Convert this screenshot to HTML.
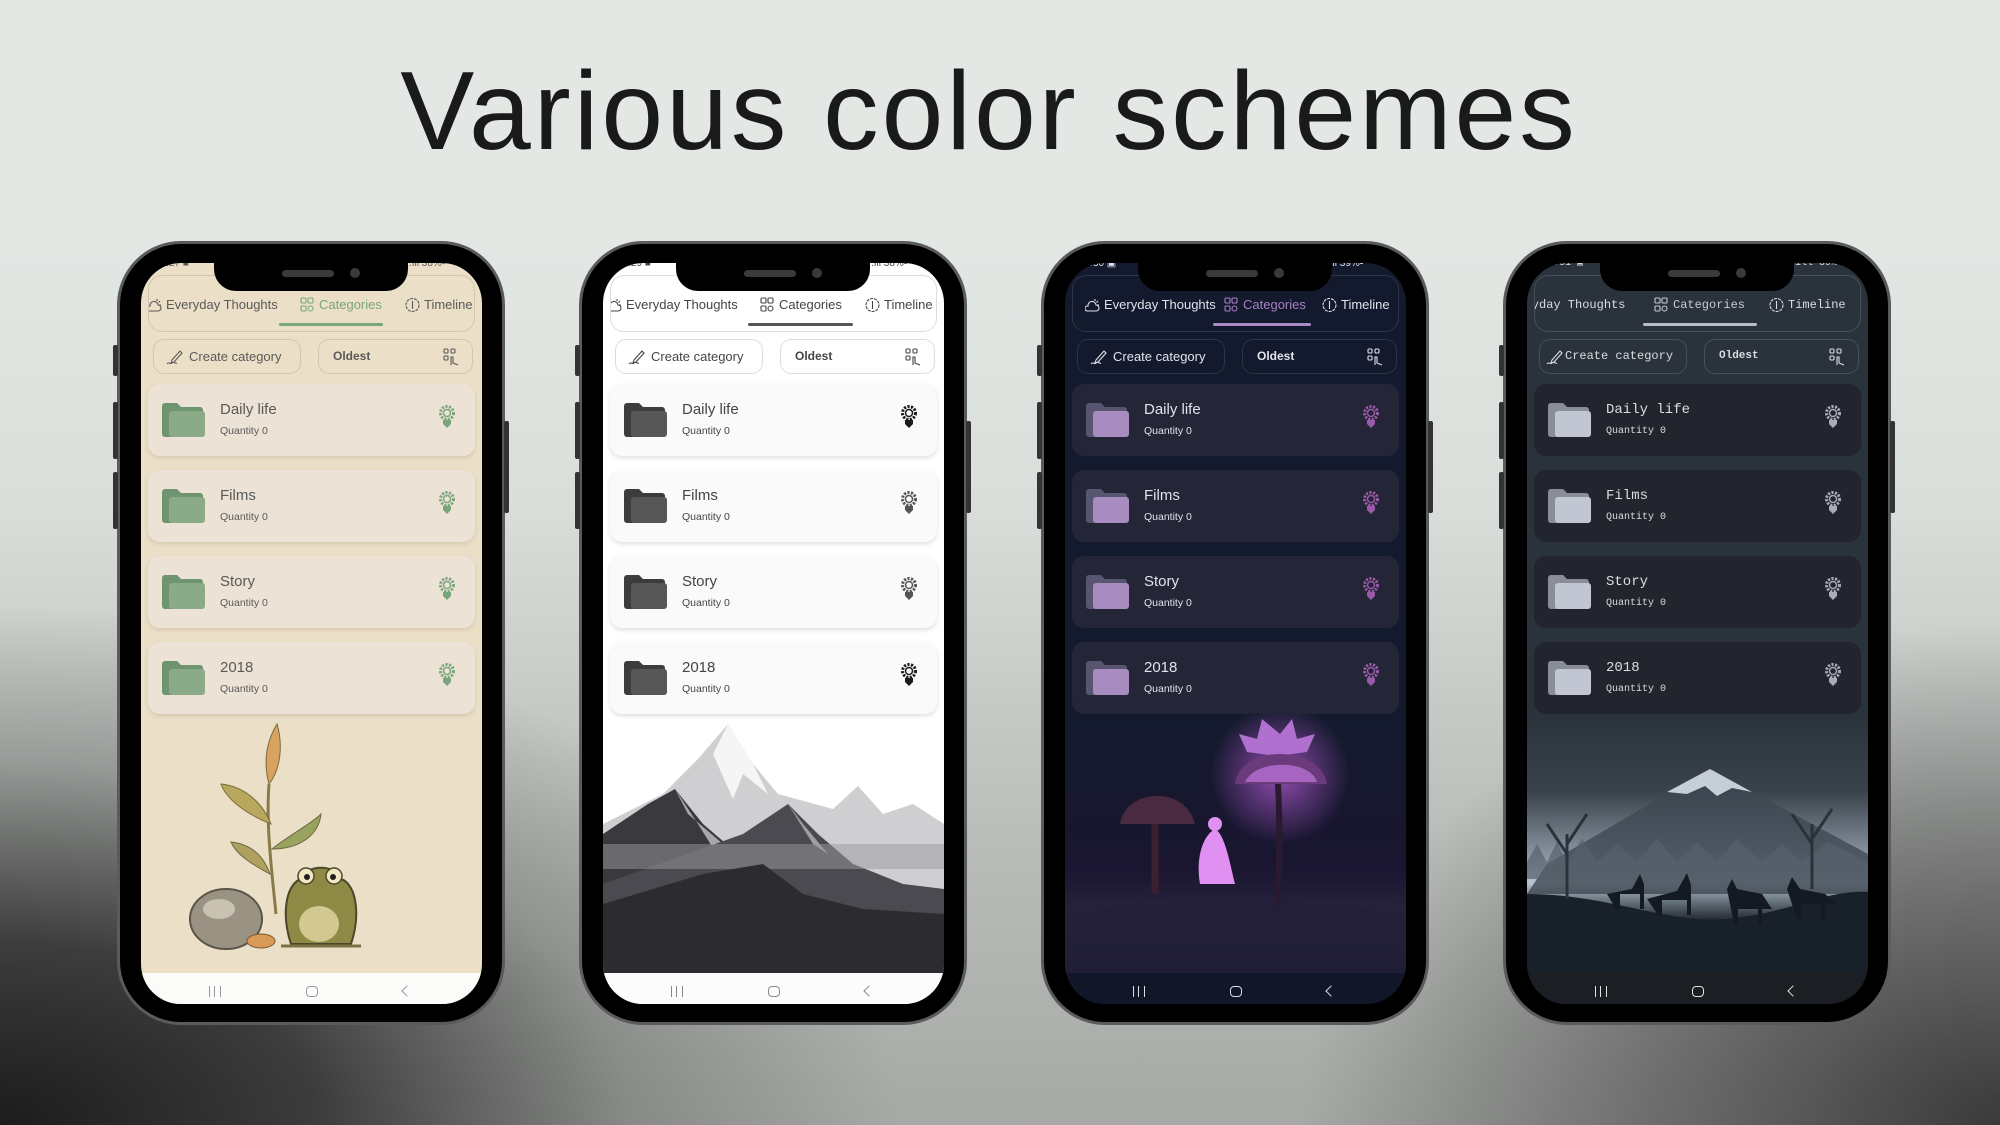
<!DOCTYPE html>
<html><head><meta charset="utf-8">
<style>
*{margin:0;padding:0;box-sizing:border-box}
body{width:2000px;height:1125px;overflow:hidden;position:relative;font-family:"Liberation Sans",sans-serif;
background:
radial-gradient(ellipse 900px 520px at 0px 1125px,#1c1c1c 0%,rgba(40,40,40,.85) 35%,rgba(90,92,90,.4) 70%,rgba(150,150,150,0) 100%),
radial-gradient(ellipse 700px 500px at 2000px 1125px,#3a3a3a 0%,rgba(70,70,70,.6) 50%,rgba(150,150,150,0) 100%),
linear-gradient(180deg,#e4e8e5 0%,#e3e8e5 20%,#d9deda 45%,#b9bdb9 75%,#a6a9a6 100%);}
.title{position:absolute;left:0;width:1978px;top:56px;text-align:center;font-size:111px;line-height:111px;color:#1a1a1a;letter-spacing:3px}
.phone{position:absolute;top:241px;width:388px;height:784px}
.frame{position:absolute;inset:0;background:#000;border:3px solid #5b5b5b;border-radius:64px}
.btn{position:absolute;background:#333;width:5px;border-radius:2px}
.screen{position:absolute;left:24px;top:22px;width:341px;height:741px;border-radius:40px;overflow:hidden}
.notch{position:absolute;left:97px;top:20px;width:194px;height:30px;background:#000;border-radius:0 0 22px 22px}
.spk{position:absolute;left:68px;top:9px;width:52px;height:7px;border-radius:4px;background:#3a3a3a}
.cam{position:absolute;left:136px;top:7px;width:10px;height:10px;border-radius:5px;background:#3a3a3a}
.tabs{position:absolute;left:7px;top:12px;width:327px;height:57px;border:1px solid;border-radius:14px;overflow:hidden}
.tab{position:absolute;top:21px;font-size:13px;white-space:nowrap;line-height:16px}
.tab svg{position:absolute;left:-19px;top:0}
.ul{position:absolute;top:47px;height:3px;border-radius:2px}
.b{position:absolute;top:76px;height:35px;border:1px solid;border-radius:11px;font-size:13px;line-height:33px;white-space:nowrap}
.b1{left:12px;width:148px;padding-left:35px}
.b2{left:177px;width:155px;padding-left:14px;font-weight:bold;font-size:12px}
.b1 svg{position:absolute;left:12px;top:8px}
.b2 svg{position:absolute;left:124px;top:8px}
.card{position:absolute;left:7px;width:327px;height:72px;border-radius:12px}
.card .fo{position:absolute;left:14px;top:19px}
.card .t{position:absolute;left:72px;top:17px;font-size:15px;line-height:18px}
.card .q{position:absolute;left:72px;top:41px;font-size:10.5px;line-height:13px}
.card .g{position:absolute;left:290px;top:20px}
.nav{position:absolute;left:0;top:710px;width:341px;height:31px}
.nav .n1{position:absolute;left:68px;top:13px;width:12px;height:11px;border-left:1.5px solid;border-right:1.5px solid}
.nav .n1:after{content:"";position:absolute;left:4px;top:0;width:0;height:11px;border-left:1.5px solid}
.nav .n2{position:absolute;left:165px;top:13px;width:12px;height:11px;border:1.5px solid;border-radius:4px}
.nav .n3{position:absolute;left:262px;top:14px;width:8px;height:8px;border-left:1.5px solid;border-bottom:1.5px solid;transform:rotate(45deg)}
.st{position:absolute;top:-4px;font-size:10px;line-height:10px}
.t1 .screen{background:#ebdfc7;color:#5a5a58}
.t1 .tabs,.t1 .b{border-color:#d2c6b0}
.t1 .card{background:#ece2d5;box-shadow:0 2px 4px rgba(120,100,70,.18)}
.t1 .acc{color:#7aa67e}.t1 .ul{background:#7aa67e}
.t1 .nav{background:#fbfbfa;color:#999}
.t2 .screen{background:#fff;color:#444}
.t2 .tabs,.t2 .b{border-color:#ddd}
.t2 .card{background:#fafafa;box-shadow:0 2px 5px rgba(0,0,0,.13)}
.t2 .acc{color:#444}.t2 .ul{background:#555}
.t2 .nav{background:#fcfcfc;color:#888}
.t3 .screen{background:#131a2d;color:#e2e2ea}
.t3 .tabs,.t3 .b{border-color:#2e3448}
.t3 .card{background:#242536}
.t3 .acc{color:#a77fc4}.t3 .ul{background:#a98ac4}
.t3 .nav{background:#111628;color:#ddd}
.t4 .screen{background:#2a323b;color:#dcdde2;font-family:"Liberation Mono",monospace}
.t4 .tabs,.t4 .b{border-color:#46505a}
.t4 .card{background:#22252d}
.t4 .acc{color:#c6cad4}.t4 .ul{background:#b8bcc6}
.t4 .nav{background:#1b1e23;color:#e0e0e0}
</style></head><body>
<div class="title">Various color schemes</div>

<!-- PHONE 1 -->
<div class="phone t1" style="left:117px">
<div class="frame"></div>
<div class="btn" style="left:-4px;top:104px;height:31px"></div><div class="btn" style="left:-4px;top:161px;height:57px"></div><div class="btn" style="left:-4px;top:231px;height:57px"></div><div class="btn" style="left:387px;top:180px;height:92px"></div>
<div class="screen">
<div class="st" style="left:14px">20:27 ■</div><div class="st" style="left:268px">.ıll 38%▪</div>
<div class="tabs">
<div class="tab" style="left:17px"><svg width="15" height="16" viewBox="0 0 15 16" fill="none" stroke="currentColor" stroke-width="1.1"><path d="M2 14h9a3 3 0 0 0 0-6 4 4 0 0 0-8 1 2.5 2.5 0 0 0-1 5z"/><path d="M10 2v2M13 4l-1.5 1.5M14 8h-2"/></svg>Everyday Thoughts</div>
<div class="tab acc" style="left:170px"><svg width="15" height="16" viewBox="0 0 15 16" fill="none" stroke="currentColor" stroke-width="1.1"><rect x="1" y="1" width="5" height="5" rx="1"/><rect x="8" y="1" width="5" height="5" rx="1"/><rect x="1" y="9" width="5" height="5" rx="1"/><circle cx="10.5" cy="11.5" r="2.5"/></svg>Categories</div>
<div class="ul" style="left:130px;width:104px"></div>
<div class="tab" style="left:275px"><svg width="15" height="16" viewBox="0 0 15 16" fill="none" stroke="currentColor" stroke-width="1.1"><circle cx="7.5" cy="8" r="6.5" stroke-dasharray="3 1"/><path d="M7.5 4v8"/></svg>Timeline</div>
</div>
<div class="b b1"><svg width="18" height="18" viewBox="0 0 18 18" fill="none" stroke="currentColor" stroke-width="1.1"><path d="M6 12l8-9 2 2-8 9-3 1z"/><path d="M1 16c2-3 3 1 5-1s3 1 5 0"/></svg>Create category</div>
<div class="b b2">Oldest<svg width="17" height="18" viewBox="0 0 17 18" fill="none" stroke="currentColor" stroke-width="1.1"><rect x="1" y="1" width="4" height="4" rx="1"/><rect x="8" y="1" width="4" height="4" rx="1"/><rect x="1" y="8" width="4" height="4" rx="1"/><path d="M8 17v-8h2v6l5 2"/></svg></div>
<div class="card" style="top:121px"><svg class="fo" width="43" height="34" viewBox="0 0 43 34"><path d="M0 3a3 3 0 0 1 3-3h12l4 4h19a3 3 0 0 1 3 3v24a3 3 0 0 1-3 3H3a3 3 0 0 1-3-3z" fill="#6e9470"/><rect x="7" y="8" width="36" height="26" rx="3" fill="#8aaa88"/></svg><div class="t">Daily life</div><div class="q">Quantity 0</div><svg class="g acc" width="18" height="26" viewBox="0 0 18 26"><circle cx="9" cy="9" r="6.5" fill="none" stroke="currentColor" stroke-width="3" stroke-dasharray="2.2 1.4"/><circle cx="9" cy="9" r="3.5" fill="none" stroke="currentColor" stroke-width="1.5"/><path d="M5 16h8v4l-4 4-4-4z" fill="currentColor"/></svg></div>
<div class="card" style="top:207px"><svg class="fo" width="43" height="34" viewBox="0 0 43 34"><path d="M0 3a3 3 0 0 1 3-3h12l4 4h19a3 3 0 0 1 3 3v24a3 3 0 0 1-3 3H3a3 3 0 0 1-3-3z" fill="#6e9470"/><rect x="7" y="8" width="36" height="26" rx="3" fill="#8aaa88"/></svg><div class="t">Films</div><div class="q">Quantity 0</div><svg class="g acc" width="18" height="26" viewBox="0 0 18 26"><circle cx="9" cy="9" r="6.5" fill="none" stroke="currentColor" stroke-width="3" stroke-dasharray="2.2 1.4"/><circle cx="9" cy="9" r="3.5" fill="none" stroke="currentColor" stroke-width="1.5"/><path d="M5 16h8v4l-4 4-4-4z" fill="currentColor"/></svg></div>
<div class="card" style="top:293px"><svg class="fo" width="43" height="34" viewBox="0 0 43 34"><path d="M0 3a3 3 0 0 1 3-3h12l4 4h19a3 3 0 0 1 3 3v24a3 3 0 0 1-3 3H3a3 3 0 0 1-3-3z" fill="#6e9470"/><rect x="7" y="8" width="36" height="26" rx="3" fill="#8aaa88"/></svg><div class="t">Story</div><div class="q">Quantity 0</div><svg class="g acc" width="18" height="26" viewBox="0 0 18 26"><circle cx="9" cy="9" r="6.5" fill="none" stroke="currentColor" stroke-width="3" stroke-dasharray="2.2 1.4"/><circle cx="9" cy="9" r="3.5" fill="none" stroke="currentColor" stroke-width="1.5"/><path d="M5 16h8v4l-4 4-4-4z" fill="currentColor"/></svg></div>
<div class="card" style="top:379px"><svg class="fo" width="43" height="34" viewBox="0 0 43 34"><path d="M0 3a3 3 0 0 1 3-3h12l4 4h19a3 3 0 0 1 3 3v24a3 3 0 0 1-3 3H3a3 3 0 0 1-3-3z" fill="#6e9470"/><rect x="7" y="8" width="36" height="26" rx="3" fill="#8aaa88"/></svg><div class="t">2018</div><div class="q">Quantity 0</div><svg class="g acc" width="18" height="26" viewBox="0 0 18 26"><circle cx="9" cy="9" r="6.5" fill="none" stroke="currentColor" stroke-width="3" stroke-dasharray="2.2 1.4"/><circle cx="9" cy="9" r="3.5" fill="none" stroke="currentColor" stroke-width="1.5"/><path d="M5 16h8v4l-4 4-4-4z" fill="currentColor"/></svg></div>
<svg style="position:absolute;left:0;top:451px" width="341" height="259" viewBox="0 0 341 259">
<path d="M135 200 C130 150 125 110 128 70" stroke="#8a7a4a" stroke-width="3" fill="none"/>
<path d="M128 70 C120 40 130 20 136 10 C142 30 140 55 128 70z" fill="#d9a25e" stroke="#7a6a40"/>
<path d="M130 110 C105 100 85 85 80 70 C100 72 120 85 130 110z" fill="#b9a75e" stroke="#7a6a40"/>
<path d="M131 135 C150 120 170 110 180 100 C178 120 160 135 131 135z" fill="#9aa260" stroke="#6a6a40"/>
<path d="M129 160 C110 150 95 140 90 128 C108 130 122 140 129 160z" fill="#b0a060" stroke="#6a6a40"/>
<ellipse cx="85" cy="205" rx="36" ry="30" fill="#9a9384" stroke="#5a5448" stroke-width="2"/>
<ellipse cx="78" cy="195" rx="16" ry="10" fill="#c9c2b2"/>
<ellipse cx="120" cy="227" rx="14" ry="7" fill="#d99a58" stroke="#7a5a30"/>
<path d="M150 230 C140 200 145 170 160 165 C165 150 195 150 200 165 C215 170 220 200 210 230z" fill="#8e8a46" stroke="#4a4828" stroke-width="2"/>
<ellipse cx="178" cy="210" rx="20" ry="18" fill="#d2c890"/>
<circle cx="165" cy="162" r="8" fill="#f0e8c0" stroke="#4a4828" stroke-width="1.5"/><circle cx="193" cy="162" r="8" fill="#f0e8c0" stroke="#4a4828" stroke-width="1.5"/>
<circle cx="166" cy="163" r="3" fill="#222"/><circle cx="192" cy="163" r="3" fill="#222"/>
<path d="M140 232 h80" stroke="#7a7240" stroke-width="3"/>
</svg>
<div class="nav"><div class="n1"></div><div class="n2"></div><div class="n3"></div></div>
</div>
<div class="notch"><div class="spk"></div><div class="cam"></div></div>
</div>

<!-- PHONE 2 -->
<div class="phone t2" style="left:579px">
<div class="frame"></div>
<div class="btn" style="left:-4px;top:104px;height:31px"></div><div class="btn" style="left:-4px;top:161px;height:57px"></div><div class="btn" style="left:-4px;top:231px;height:57px"></div><div class="btn" style="left:387px;top:180px;height:92px"></div>
<div class="screen">
<div class="st" style="left:14px">20:29 ■</div><div class="st" style="left:268px">.ıll 38%▪</div>
<svg style="position:absolute;left:0;top:451px" width="341" height="259" viewBox="0 0 341 259">
<rect width="341" height="259" fill="#fff"/>
<path d="M0 110 L60 80 L95 45 L125 10 L150 50 L175 80 L230 95 L255 72 L280 100 L310 90 L341 110 V180 H0z" fill="#cfcfd1"/>
<path d="M110 40 L125 10 L150 50 L165 80 L140 60 L130 85z" fill="#f5f5f5"/>
<path d="M0 120 L45 90 L72 75 L100 110 L135 140 L130 180 H0z" fill="#3a3a3e"/>
<path d="M72 75 L85 100 L120 130 L140 155 L120 150 L95 110z" fill="#a8a8ac"/>
<path d="M140 120 L185 90 L215 120 L250 150 L300 170 L341 175 V259 H0 V170 Z" fill="#4a4a50"/>
<path d="M185 90 L200 110 L225 140 L210 130z" fill="#a0a0a4"/>
<rect x="0" y="130" width="341" height="25" fill="#9a9a9e" opacity=".5"/>
<path d="M0 190 L100 160 L160 150 L200 180 L260 195 L341 200 V259 H0z" fill="#2c2c30"/>
</svg>
<div class="tabs">
<div class="tab" style="left:15px"><svg width="15" height="16" viewBox="0 0 15 16" fill="none" stroke="currentColor" stroke-width="1.1"><path d="M2 14h9a3 3 0 0 0 0-6 4 4 0 0 0-8 1 2.5 2.5 0 0 0-1 5z"/><path d="M10 2v2M13 4l-1.5 1.5M14 8h-2"/></svg>Everyday Thoughts</div>
<div class="tab acc" style="left:168px"><svg width="15" height="16" viewBox="0 0 15 16" fill="none" stroke="currentColor" stroke-width="1.1"><rect x="1" y="1" width="5" height="5" rx="1"/><rect x="8" y="1" width="5" height="5" rx="1"/><rect x="1" y="9" width="5" height="5" rx="1"/><circle cx="10.5" cy="11.5" r="2.5"/></svg>Categories</div>
<div class="ul" style="left:137px;width:105px"></div>
<div class="tab" style="left:273px"><svg width="15" height="16" viewBox="0 0 15 16" fill="none" stroke="currentColor" stroke-width="1.1"><circle cx="7.5" cy="8" r="6.5" stroke-dasharray="3 1"/><path d="M7.5 4v8"/></svg>Timeline</div>
</div>
<div class="b b1"><svg width="18" height="18" viewBox="0 0 18 18" fill="none" stroke="currentColor" stroke-width="1.1"><path d="M6 12l8-9 2 2-8 9-3 1z"/><path d="M1 16c2-3 3 1 5-1s3 1 5 0"/></svg>Create category</div>
<div class="b b2">Oldest<svg width="17" height="18" viewBox="0 0 17 18" fill="none" stroke="currentColor" stroke-width="1.1"><rect x="1" y="1" width="4" height="4" rx="1"/><rect x="8" y="1" width="4" height="4" rx="1"/><rect x="1" y="8" width="4" height="4" rx="1"/><path d="M8 17v-8h2v6l5 2"/></svg></div>
<div class="card" style="top:121px"><svg class="fo" width="43" height="34" viewBox="0 0 43 34"><path d="M0 3a3 3 0 0 1 3-3h12l4 4h19a3 3 0 0 1 3 3v24a3 3 0 0 1-3 3H3a3 3 0 0 1-3-3z" fill="#3c3c3c"/><rect x="7" y="8" width="36" height="26" rx="3" fill="#575757"/></svg><div class="t">Daily life</div><div class="q">Quantity 0</div><svg class="g" style="color:#1a1a1a" width="18" height="26" viewBox="0 0 18 26"><circle cx="9" cy="9" r="6.5" fill="none" stroke="currentColor" stroke-width="3" stroke-dasharray="2.2 1.4"/><circle cx="9" cy="9" r="3.5" fill="none" stroke="currentColor" stroke-width="1.5"/><path d="M5 16h8v4l-4 4-4-4z" fill="currentColor"/></svg></div>
<div class="card" style="top:207px"><svg class="fo" width="43" height="34" viewBox="0 0 43 34"><path d="M0 3a3 3 0 0 1 3-3h12l4 4h19a3 3 0 0 1 3 3v24a3 3 0 0 1-3 3H3a3 3 0 0 1-3-3z" fill="#3c3c3c"/><rect x="7" y="8" width="36" height="26" rx="3" fill="#575757"/></svg><div class="t">Films</div><div class="q">Quantity 0</div><svg class="g" style="color:#555" width="18" height="26" viewBox="0 0 18 26"><circle cx="9" cy="9" r="6.5" fill="none" stroke="currentColor" stroke-width="3" stroke-dasharray="2.2 1.4"/><circle cx="9" cy="9" r="3.5" fill="none" stroke="currentColor" stroke-width="1.5"/><path d="M5 16h8v4l-4 4-4-4z" fill="currentColor"/></svg></div>
<div class="card" style="top:293px"><svg class="fo" width="43" height="34" viewBox="0 0 43 34"><path d="M0 3a3 3 0 0 1 3-3h12l4 4h19a3 3 0 0 1 3 3v24a3 3 0 0 1-3 3H3a3 3 0 0 1-3-3z" fill="#3c3c3c"/><rect x="7" y="8" width="36" height="26" rx="3" fill="#575757"/></svg><div class="t">Story</div><div class="q">Quantity 0</div><svg class="g" style="color:#555" width="18" height="26" viewBox="0 0 18 26"><circle cx="9" cy="9" r="6.5" fill="none" stroke="currentColor" stroke-width="3" stroke-dasharray="2.2 1.4"/><circle cx="9" cy="9" r="3.5" fill="none" stroke="currentColor" stroke-width="1.5"/><path d="M5 16h8v4l-4 4-4-4z" fill="currentColor"/></svg></div>
<div class="card" style="top:379px"><svg class="fo" width="43" height="34" viewBox="0 0 43 34"><path d="M0 3a3 3 0 0 1 3-3h12l4 4h19a3 3 0 0 1 3 3v24a3 3 0 0 1-3 3H3a3 3 0 0 1-3-3z" fill="#3c3c3c"/><rect x="7" y="8" width="36" height="26" rx="3" fill="#575757"/></svg><div class="t">2018</div><div class="q">Quantity 0</div><svg class="g" style="color:#1a1a1a" width="18" height="26" viewBox="0 0 18 26"><circle cx="9" cy="9" r="6.5" fill="none" stroke="currentColor" stroke-width="3" stroke-dasharray="2.2 1.4"/><circle cx="9" cy="9" r="3.5" fill="none" stroke="currentColor" stroke-width="1.5"/><path d="M5 16h8v4l-4 4-4-4z" fill="currentColor"/></svg></div>
<div class="nav"><div class="n1"></div><div class="n2"></div><div class="n3"></div></div>
</div>
<div class="notch"><div class="spk"></div><div class="cam"></div></div>
</div>

<!-- PHONE 3 -->
<div class="phone t3" style="left:1041px">
<div class="frame"></div>
<div class="btn" style="left:-4px;top:104px;height:31px"></div><div class="btn" style="left:-4px;top:161px;height:57px"></div><div class="btn" style="left:-4px;top:231px;height:57px"></div><div class="btn" style="left:387px;top:180px;height:92px"></div>
<div class="screen">
<div class="st" style="left:14px">20:30 ▣</div><div class="st" style="left:262px">.ıll 39%▪</div>
<svg style="position:absolute;left:0;top:451px" width="341" height="259" viewBox="0 0 341 259">
<defs><radialGradient id="gl" cx="0.5" cy="0.5" r="0.5"><stop offset="0" stop-color="#b05ad0" stop-opacity=".8"/><stop offset="1" stop-color="#b05ad0" stop-opacity="0"/></radialGradient>
<linearGradient id="gr3" x1="0" y1="0" x2="0" y2="1"><stop offset="0" stop-color="#131a2d"/><stop offset=".6" stop-color="#1a1530"/><stop offset=".8" stop-color="#2a2640"/><stop offset="1" stop-color="#161c30"/></linearGradient></defs>
<rect width="341" height="259" fill="url(#gr3)"/>
<circle cx="215" cy="60" r="70" fill="url(#gl)"/>
<path d="M215 20 l12 -15 l5 20 l18 -5 l-8 18 l-30 4 l-30 -4 l-8 -18 l18 5 l5 -20z" fill="#b070d0"/>
<path d="M170 70 C175 30 255 30 262 70 Z" fill="#6a3a7a"/>
<path d="M180 68 C190 45 245 45 252 68 Z" fill="#c078e0" opacity=".7"/>
<path d="M213 70 C215 110 215 150 212 200" stroke="#2a1a30" stroke-width="6" fill="none"/>
<path d="M55 110 C60 75 120 70 130 110 Z" fill="#4a2a40"/>
<path d="M90 110 v70" stroke="#3a2030" stroke-width="7"/>
<path d="M135 170 C130 140 140 120 150 115 C160 120 165 150 170 170 Z" fill="#e090f0"/>
<circle cx="150" cy="110" r="7" fill="#e090f0"/>
<path d="M0 200 C80 185 260 185 341 200 V259 H0z" fill="#231f38" opacity=".8"/>
</svg>
<div class="tabs">
<div class="tab" style="left:31px"><svg width="15" height="16" viewBox="0 0 15 16" fill="none" stroke="currentColor" stroke-width="1.1"><path d="M2 14h9a3 3 0 0 0 0-6 4 4 0 0 0-8 1 2.5 2.5 0 0 0-1 5z"/><path d="M10 2v2M13 4l-1.5 1.5M14 8h-2"/></svg>Everyday Thoughts</div>
<div class="tab acc" style="left:170px"><svg width="15" height="16" viewBox="0 0 15 16" fill="none" stroke="currentColor" stroke-width="1.1"><rect x="1" y="1" width="5" height="5" rx="1"/><rect x="8" y="1" width="5" height="5" rx="1"/><rect x="1" y="9" width="5" height="5" rx="1"/><circle cx="10.5" cy="11.5" r="2.5"/></svg>Categories</div>
<div class="ul" style="left:140px;width:98px"></div>
<div class="tab" style="left:268px"><svg width="15" height="16" viewBox="0 0 15 16" fill="none" stroke="currentColor" stroke-width="1.1"><circle cx="7.5" cy="8" r="6.5" stroke-dasharray="3 1"/><path d="M7.5 4v8"/></svg>Timeline</div>
</div>
<div class="b b1"><svg width="18" height="18" viewBox="0 0 18 18" fill="none" stroke="currentColor" stroke-width="1.1"><path d="M6 12l8-9 2 2-8 9-3 1z"/><path d="M1 16c2-3 3 1 5-1s3 1 5 0"/></svg>Create category</div>
<div class="b b2">Oldest<svg width="17" height="18" viewBox="0 0 17 18" fill="none" stroke="currentColor" stroke-width="1.1"><rect x="1" y="1" width="4" height="4" rx="1"/><rect x="8" y="1" width="4" height="4" rx="1"/><rect x="1" y="8" width="4" height="4" rx="1"/><path d="M8 17v-8h2v6l5 2"/></svg></div>
<div class="card" style="top:121px"><svg class="fo" width="43" height="34" viewBox="0 0 43 34"><path d="M0 3a3 3 0 0 1 3-3h12l4 4h19a3 3 0 0 1 3 3v24a3 3 0 0 1-3 3H3a3 3 0 0 1-3-3z" fill="#575570"/><rect x="7" y="8" width="36" height="26" rx="3" fill="#a88cbf"/></svg><div class="t">Daily life</div><div class="q">Quantity 0</div><svg class="g" style="color:#9a5aaa" width="18" height="26" viewBox="0 0 18 26"><circle cx="9" cy="9" r="6.5" fill="none" stroke="currentColor" stroke-width="3" stroke-dasharray="2.2 1.4"/><circle cx="9" cy="9" r="3.5" fill="none" stroke="currentColor" stroke-width="1.5"/><path d="M5 16h8v4l-4 4-4-4z" fill="currentColor"/></svg></div>
<div class="card" style="top:207px"><svg class="fo" width="43" height="34" viewBox="0 0 43 34"><path d="M0 3a3 3 0 0 1 3-3h12l4 4h19a3 3 0 0 1 3 3v24a3 3 0 0 1-3 3H3a3 3 0 0 1-3-3z" fill="#575570"/><rect x="7" y="8" width="36" height="26" rx="3" fill="#a88cbf"/></svg><div class="t">Films</div><div class="q">Quantity 0</div><svg class="g" style="color:#9a5aaa" width="18" height="26" viewBox="0 0 18 26"><circle cx="9" cy="9" r="6.5" fill="none" stroke="currentColor" stroke-width="3" stroke-dasharray="2.2 1.4"/><circle cx="9" cy="9" r="3.5" fill="none" stroke="currentColor" stroke-width="1.5"/><path d="M5 16h8v4l-4 4-4-4z" fill="currentColor"/></svg></div>
<div class="card" style="top:293px"><svg class="fo" width="43" height="34" viewBox="0 0 43 34"><path d="M0 3a3 3 0 0 1 3-3h12l4 4h19a3 3 0 0 1 3 3v24a3 3 0 0 1-3 3H3a3 3 0 0 1-3-3z" fill="#575570"/><rect x="7" y="8" width="36" height="26" rx="3" fill="#a88cbf"/></svg><div class="t">Story</div><div class="q">Quantity 0</div><svg class="g" style="color:#9a5aaa" width="18" height="26" viewBox="0 0 18 26"><circle cx="9" cy="9" r="6.5" fill="none" stroke="currentColor" stroke-width="3" stroke-dasharray="2.2 1.4"/><circle cx="9" cy="9" r="3.5" fill="none" stroke="currentColor" stroke-width="1.5"/><path d="M5 16h8v4l-4 4-4-4z" fill="currentColor"/></svg></div>
<div class="card" style="top:379px"><svg class="fo" width="43" height="34" viewBox="0 0 43 34"><path d="M0 3a3 3 0 0 1 3-3h12l4 4h19a3 3 0 0 1 3 3v24a3 3 0 0 1-3 3H3a3 3 0 0 1-3-3z" fill="#575570"/><rect x="7" y="8" width="36" height="26" rx="3" fill="#a88cbf"/></svg><div class="t">2018</div><div class="q">Quantity 0</div><svg class="g" style="color:#9a5aaa" width="18" height="26" viewBox="0 0 18 26"><circle cx="9" cy="9" r="6.5" fill="none" stroke="currentColor" stroke-width="3" stroke-dasharray="2.2 1.4"/><circle cx="9" cy="9" r="3.5" fill="none" stroke="currentColor" stroke-width="1.5"/><path d="M5 16h8v4l-4 4-4-4z" fill="currentColor"/></svg></div>
<div class="nav"><div class="n1"></div><div class="n2"></div><div class="n3"></div></div>
</div>
<div class="notch"><div class="spk"></div><div class="cam"></div></div>
</div>

<!-- PHONE 4 -->
<div class="phone t4" style="left:1503px">
<div class="frame"></div>
<div class="btn" style="left:-4px;top:104px;height:31px"></div><div class="btn" style="left:-4px;top:161px;height:57px"></div><div class="btn" style="left:-4px;top:231px;height:57px"></div><div class="btn" style="left:387px;top:180px;height:92px"></div>
<div class="screen">
<div class="st" style="left:14px">20:31 ▣</div><div class="st" style="left:262px">.ıll 39%▪</div>
<svg style="position:absolute;left:0;top:451px" width="341" height="259" viewBox="0 0 341 259">
<defs><linearGradient id="g4" x1="0" y1="0" x2="0" y2="1"><stop offset="0" stop-color="#2a323b"/><stop offset=".3" stop-color="#3a434c"/><stop offset=".55" stop-color="#8a96a2"/><stop offset=".65" stop-color="#b8c4cf"/><stop offset=".72" stop-color="#6a7680"/><stop offset=".8" stop-color="#1e252d"/><stop offset="1" stop-color="#1c232b"/></linearGradient></defs>
<rect width="341" height="259" fill="url(#g4)"/>
<path d="M20 150 L183 55 L341 140 V180 H0z" fill="#3e4852" opacity=".8"/>
<path d="M140 78 L183 55 L225 78 L205 74 L190 82 L178 72 L160 80z" fill="#c6ced8"/>
<path d="M0 148 L10 130 L20 148 L30 128 L40 148 L55 125 L70 148 L90 130 L110 148 L130 125 L150 148 L170 128 L190 148 L210 125 L235 148 L255 130 L275 148 L300 128 L341 148 V165 H0z" fill="#56616c" opacity=".7"/>
<path d="M0 180 C80 180 140 210 200 205 C260 200 300 175 341 178 V259 H0z" fill="#18202a"/>
<g fill="#141a22"><path d="M80 180 l25 -5 l8 -15 l4 10 v25 h-4 v-15 h-20 v15 h-4z"/><path d="M120 185 l30 -8 l10 -18 l4 12 v30 h-4 v-15 h-25 v15 h-4z"/><path d="M200 175 l5 -10 l5 10 l25 5 l10 15 h-10 v15 h-4 v-15 h-20 v15 h-4z"/><path d="M260 175 l5 -12 l8 12 l25 5 l12 10 h-12 v15 h-4 v-15 h-20 v15 h-4z"/></g>
<path d="M40 185 V120 M40 140 L20 110 M40 130 L60 100 M285 175 V110 M285 130 L265 100 M285 125 L305 95" stroke="#2a323b" stroke-width="3" fill="none"/>
</svg>
<div class="tabs">
<div class="tab" style="left:-32px;font-size:12px">Everyday Thoughts</div>
<div class="tab acc" style="left:138px;font-size:12px"><svg width="15" height="16" viewBox="0 0 15 16" fill="none" stroke="currentColor" stroke-width="1.1"><rect x="1" y="1" width="5" height="5" rx="1"/><rect x="8" y="1" width="5" height="5" rx="1"/><rect x="1" y="9" width="5" height="5" rx="1"/><circle cx="10.5" cy="11.5" r="2.5"/></svg>Categories</div>
<div class="ul" style="left:108px;width:114px"></div>
<div class="tab" style="left:253px;font-size:12px"><svg width="15" height="16" viewBox="0 0 15 16" fill="none" stroke="currentColor" stroke-width="1.1"><circle cx="7.5" cy="8" r="6.5" stroke-dasharray="3 1"/><path d="M7.5 4v8"/></svg>Timeline</div>
</div>
<div class="b b1" style="padding-left:25px;font-size:12px"><svg style="left:6px" width="18" height="18" viewBox="0 0 18 18" fill="none" stroke="currentColor" stroke-width="1.1"><path d="M6 12l8-9 2 2-8 9-3 1z"/><path d="M1 16c2-3 3 1 5-1s3 1 5 0"/></svg>Create category</div>
<div class="b b2" style="font-size:11px">Oldest<svg width="17" height="18" viewBox="0 0 17 18" fill="none" stroke="currentColor" stroke-width="1.1"><rect x="1" y="1" width="4" height="4" rx="1"/><rect x="8" y="1" width="4" height="4" rx="1"/><rect x="1" y="8" width="4" height="4" rx="1"/><path d="M8 17v-8h2v6l5 2"/></svg></div>
<div class="card" style="top:121px"><svg class="fo" width="43" height="34" viewBox="0 0 43 34"><path d="M0 3a3 3 0 0 1 3-3h12l4 4h19a3 3 0 0 1 3 3v24a3 3 0 0 1-3 3H3a3 3 0 0 1-3-3z" fill="#888d98"/><rect x="7" y="8" width="36" height="26" rx="3" fill="#c2c6d2"/></svg><div class="t" style="font-size:14px">Daily life</div><div class="q" style="font-size:10px">Quantity 0</div><svg class="g" style="color:#a8acb6" width="18" height="26" viewBox="0 0 18 26"><circle cx="9" cy="9" r="6.5" fill="none" stroke="currentColor" stroke-width="3" stroke-dasharray="2.2 1.4"/><circle cx="9" cy="9" r="3.5" fill="none" stroke="currentColor" stroke-width="1.5"/><path d="M5 16h8v4l-4 4-4-4z" fill="currentColor"/></svg></div>
<div class="card" style="top:207px"><svg class="fo" width="43" height="34" viewBox="0 0 43 34"><path d="M0 3a3 3 0 0 1 3-3h12l4 4h19a3 3 0 0 1 3 3v24a3 3 0 0 1-3 3H3a3 3 0 0 1-3-3z" fill="#888d98"/><rect x="7" y="8" width="36" height="26" rx="3" fill="#c2c6d2"/></svg><div class="t" style="font-size:14px">Films</div><div class="q" style="font-size:10px">Quantity 0</div><svg class="g" style="color:#a8acb6" width="18" height="26" viewBox="0 0 18 26"><circle cx="9" cy="9" r="6.5" fill="none" stroke="currentColor" stroke-width="3" stroke-dasharray="2.2 1.4"/><circle cx="9" cy="9" r="3.5" fill="none" stroke="currentColor" stroke-width="1.5"/><path d="M5 16h8v4l-4 4-4-4z" fill="currentColor"/></svg></div>
<div class="card" style="top:293px"><svg class="fo" width="43" height="34" viewBox="0 0 43 34"><path d="M0 3a3 3 0 0 1 3-3h12l4 4h19a3 3 0 0 1 3 3v24a3 3 0 0 1-3 3H3a3 3 0 0 1-3-3z" fill="#888d98"/><rect x="7" y="8" width="36" height="26" rx="3" fill="#c2c6d2"/></svg><div class="t" style="font-size:14px">Story</div><div class="q" style="font-size:10px">Quantity 0</div><svg class="g" style="color:#a8acb6" width="18" height="26" viewBox="0 0 18 26"><circle cx="9" cy="9" r="6.5" fill="none" stroke="currentColor" stroke-width="3" stroke-dasharray="2.2 1.4"/><circle cx="9" cy="9" r="3.5" fill="none" stroke="currentColor" stroke-width="1.5"/><path d="M5 16h8v4l-4 4-4-4z" fill="currentColor"/></svg></div>
<div class="card" style="top:379px"><svg class="fo" width="43" height="34" viewBox="0 0 43 34"><path d="M0 3a3 3 0 0 1 3-3h12l4 4h19a3 3 0 0 1 3 3v24a3 3 0 0 1-3 3H3a3 3 0 0 1-3-3z" fill="#888d98"/><rect x="7" y="8" width="36" height="26" rx="3" fill="#c2c6d2"/></svg><div class="t" style="font-size:14px">2018</div><div class="q" style="font-size:10px">Quantity 0</div><svg class="g" style="color:#a8acb6" width="18" height="26" viewBox="0 0 18 26"><circle cx="9" cy="9" r="6.5" fill="none" stroke="currentColor" stroke-width="3" stroke-dasharray="2.2 1.4"/><circle cx="9" cy="9" r="3.5" fill="none" stroke="currentColor" stroke-width="1.5"/><path d="M5 16h8v4l-4 4-4-4z" fill="currentColor"/></svg></div>
<div class="nav"><div class="n1"></div><div class="n2"></div><div class="n3"></div></div>
</div>
<div class="notch"><div class="spk"></div><div class="cam"></div></div>
</div>
</body></html>
